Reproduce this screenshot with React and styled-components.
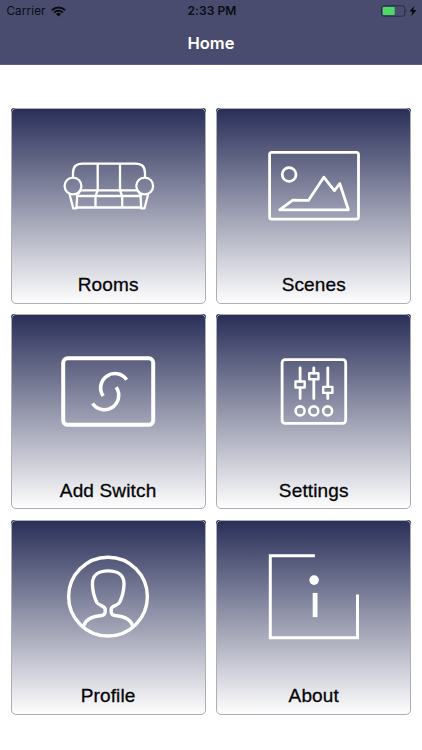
import React from 'react';
import styled, { createGlobalStyle } from 'styled-components';

const GlobalStyle = createGlobalStyle`
  * { box-sizing: border-box; }
  body { margin: 0; background: #fff; }
`;

const Screen = styled.div`
  width: 422px;
  height: 750px;
  overflow: hidden;
  background: #fff;
  font-family: 'Liberation Sans', Arial, sans-serif;
`;

const Header = styled.header`
  height: 65.4px;
  background: #494c6e;
  border-bottom: 1px solid #5d6080;
`;

const StatusBar = styled.div`
  display: grid;
  grid-template-columns: 1fr auto 1fr;
  align-items: center;
  height: 22px;
  padding: 0 5px 0 6.5px;
  font-family: Inter, sans-serif;
  font-size: 12px;
  line-height: 22px;
  color: #0b0b12;
`;

const Carrier = styled.div`
  display: flex;
  align-items: center;
  gap: 5px;
  font-size: 11.6px;
  letter-spacing: 0.15px;
`;

const Clock = styled.div`
  padding-left: 0.5px;
  font-weight: 600;
  letter-spacing: 0.1px;
`;

const Battery = styled.div`
  display: flex;
  justify-content: flex-end;
`;

const Title = styled.h1`
  margin: 0;
  height: 43px;
  line-height: 43px;
  text-align: center;
  font-family: Inter, sans-serif;
  font-size: 16.5px;
  font-weight: 600;
  color: #fff;
`;

const Grid = styled.main`
  display: grid;
  grid-template-columns: repeat(2, 195.2px);
  grid-auto-rows: 195.2px;
  gap: 10.5px;
  padding: 43px 0 0 10.5px;
`;

const Card = styled.div`
  border-radius: 3px;
  background: linear-gradient(#292e58, #fff);
`;

const Frame = styled.div`
  display: flex;
  flex-direction: column;
  align-items: center;
  height: 100%;
  padding-top: 26.6px;
  border: 1px solid #adadb3;
  border-radius: 5px;
`;

const Drawing = styled.svg`
  flex: none;
  display: block;
  width: 120px;
  height: 100px;
  fill: none;
  stroke: #fff;
  stroke-width: ${(p) => p.$weight}px;
  stroke-linejoin: round;
`;

const Label = styled.div`
  margin-top: 38px;
  font-size: 19px;
  line-height: 22px;
  letter-spacing: 0.15px;
  color: #050507;
  -webkit-text-stroke: 0.3px #050507;
`;

const WifiIcon = () => (
  <svg width="15" height="11" viewBox="0 0 15 11" fill="none" stroke="#0b0b12" strokeWidth="2">
    <path d="M0.9 4.2a9.3 9.3 0 0 1 13.2 0M3.2 6.6a6.1 6.1 0 0 1 8.6 0" />
    <path d="M7.5 10.5L5 8a3.6 3.6 0 0 1 5 0z" fill="#0b0b12" stroke="none" />
  </svg>
);

const BatteryIcon = () => (
  <svg width="36" height="12" viewBox="0 0 36 12">
    <rect x="0.5" y="0.8" width="23.3" height="10.4" rx="2.3" fill="none" stroke="#292b42" />
    <rect x="1.7" y="2" width="12" height="8" rx="0.8" fill="#4cd964" />
    <path d="M25 4.2q1.5 1.8 0 3.6z" fill="#292b42" />
    <path d="M33.4 0.8L28.5 6.6h2.9l-1.1 4.6 5.2-6.2h-3.2z" fill="#08080c" />
  </svg>
);

const SofaIcon = () => (
  <Drawing viewBox="48 136 120 100" $weight={2.3}>
    <path d="M73 177.5V173q0-9.3 9.5-9.3h53q9.5 0 9.5 9.3v4.5" />
    <circle cx="73" cy="186" r="8.4" />
    <circle cx="144.7" cy="186" r="8.4" />
    <path d="M97.7 164v26.5l-2.2 5.5v11.3M120 164v26.5l2.2 5.5v11.3M80.5 190.3h56.7M76.5 196h65M76.5 207.5h65" />
    <path d="M69.5 194l3.7 14.3h3.3l.7-13.3M148.2 194l-3.7 14.3h-3.3l-.7-13.3M76.5 196l4-5.7M141.5 196l-4-5.7" />
  </Drawing>
);

const PictureIcon = () => (
  <Drawing viewBox="253.9 136 120 100" $weight={2.8}>
    <rect x="269.5" y="152.4" width="88.9" height="66.7" rx="2.2" />
    <circle cx="289" cy="174.5" r="6.9" />
    <path d="M279.5 209.8l13.2-9.6 15.6.2 15.4-23.2 10.6 13.5 5.4-7 8.6 26.1z" />
  </Drawing>
);

const SwitchIcon = () => (
  <Drawing viewBox="48 341.7 120 100" $weight={4}>
    <rect x="63.2" y="358" width="90" height="66.5" rx="4.5" />
    <path strokeWidth="3.6" d="M126.6 379.4A14 14 0 0 0 103.2 395.7M116.2 387A14 14 0 0 1 92.6 403.2" />
  </Drawing>
);

const SlidersIcon = () => (
  <Drawing viewBox="253.9 341.7 120 100" $weight={2.8}>
    <rect x="282" y="359.4" width="63.6" height="63.6" rx="3" />
    <path strokeLinecap="round" d="M300 367.5V381M300 388v10.3M313.7 367.5V373M313.7 380v18.3M327.7 367.5v18.7M327.7 393.2v5.1" />
    <rect x="295.4" y="381.2" width="9.2" height="6" strokeWidth="2.4" />
    <rect x="309.1" y="373" width="9.2" height="6" strokeWidth="2.4" />
    <rect x="323.1" y="386.6" width="9.2" height="6" strokeWidth="2.4" />
    <circle cx="300" cy="410.6" r="4.5" strokeWidth="2.6" />
    <circle cx="313.7" cy="410.6" r="4.5" strokeWidth="2.6" />
    <circle cx="327.5" cy="410.6" r="4.5" strokeWidth="2.6" />
  </Drawing>
);

const PersonIcon = () => (
  <Drawing viewBox="48 547.4 120 100" $weight={3.4}>
    <circle cx="108" cy="597" r="39.4" />
    <path d="M84 626C86 619 92 617 100 616.2Q105 615.8 105.2 612.5V609.8C105.2 606 99.5 607 96.6 602.5C94.5 598 92.4 590 92.4 584C92.4 575.5 98.5 571.3 108.2 571.3S124 575.5 124 584C124 590 121.9 598 119.8 602.5C116.9 607 111.2 606 111.2 609.8V612.5Q111.4 615.8 116.4 616.2C124.4 617 130.4 619 132.4 626" />
  </Drawing>
);

const InfoIcon = () => (
  <Drawing viewBox="253.9 547.4 120 100" $weight={3}>
    <path strokeLinejoin="miter" d="M314.8 556.2H270.2V638.2H357.4V595" />
    <circle cx="314" cy="580.5" r="4.8" fill="#fff" stroke="none" />
    <path d="M315 593.3v24.2" strokeWidth="4.8" />
  </Drawing>
);

const tiles = [
  { label: 'Rooms', Icon: SofaIcon },
  { label: 'Scenes', Icon: PictureIcon },
  { label: 'Add Switch', Icon: SwitchIcon },
  { label: 'Settings', Icon: SlidersIcon },
  { label: 'Profile', Icon: PersonIcon },
  { label: 'About', Icon: InfoIcon },
];

export default function App() {
  return (
    <Screen>
      <GlobalStyle />
      <Header>
        <StatusBar>
          <Carrier>
            Carrier
            <WifiIcon />
          </Carrier>
          <Clock>2:33 PM</Clock>
          <Battery>
            <BatteryIcon />
          </Battery>
        </StatusBar>
        <Title>Home</Title>
      </Header>
      <Grid>
        {tiles.map(({ label, Icon }) => (
          <Card key={label}>
            <Frame>
              <Icon />
              <Label>{label}</Label>
            </Frame>
          </Card>
        ))}
      </Grid>
    </Screen>
  );
}
